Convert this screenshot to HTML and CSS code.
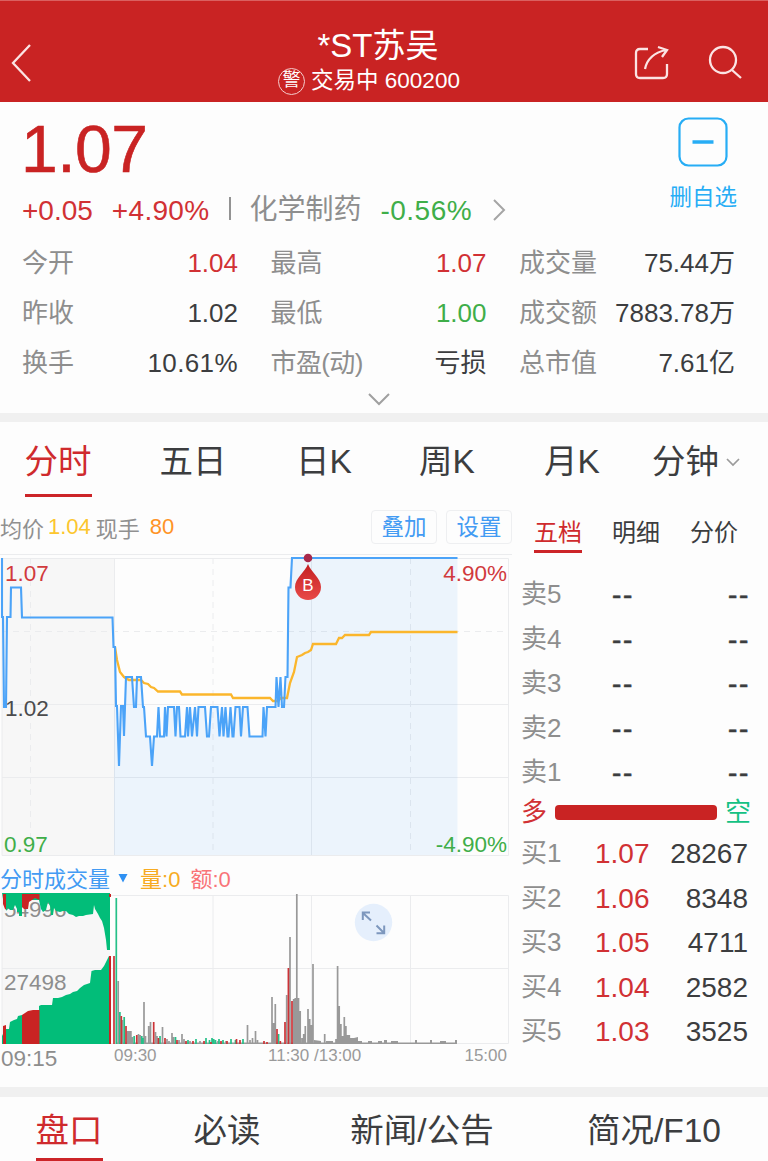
FILE: index.html
```
<!DOCTYPE html>
<html lang="zh-CN">

<head>
  <title>*ST苏吴 600200</title>
  <meta charset="utf-8">
  <link rel="stylesheet" href="styles.css">
</head>

<body>
  <header>
    <svg class="back" width="22" height="40" viewBox="0 0 22 40"><path d="M20 2L3 20L20 38"/></svg>
    <div class="title">
      <h1>*ST苏吴</h1>
      <p><span class="warn">警</span>交易中 600200</p>
    </div>
    <svg class="share" width="36" height="36" viewBox="0 0 36 36"><path d="M14 4H6Q2 4 2 8V29Q2 33 6 33H29Q33 33 33 29V19M11 24Q14 9 32 5M24 2L33 5L28 12"/></svg>
    <svg class="search" width="36" height="36" viewBox="0 0 36 36"><circle cx="15" cy="15" r="13"/><path d="M24 25L33 33"/></svg>
  </header>

  <section class="quote">
    <div class="summary">
      <div>
        <div class="price red">1.07</div>
        <div class="change">
          <span class="red">+0.05</span>
          <span class="red percent">+4.90%</span>
          <i class="divider"></i>
          <span class="sector">化学制药</span>
          <span class="green sector-change">-0.56%</span>
          <svg class="arrow" width="14" height="22" viewBox="0 0 14 22"><path d="M2 1L12 11L2 21"/></svg>
        </div>
      </div>
      <div class="watch">
        <svg width="50" height="50" viewBox="0 0 50 50"><rect x="1.500" y="1.500" width="47" height="47" rx="9"/><path d="M14.500 25H35.500"/></svg>
        <span>删自选</span>
      </div>
    </div>
    <dl class="stats">
      <div><dt>今开</dt><dd class="red">1.04</dd></div>
      <div><dt>最高</dt><dd class="red">1.07</dd></div>
      <div><dt>成交量</dt><dd>75.44万</dd></div>
      <div><dt>昨收</dt><dd>1.02</dd></div>
      <div><dt>最低</dt><dd class="green">1.00</dd></div>
      <div><dt>成交额</dt><dd>7883.78万</dd></div>
      <div><dt>换手</dt><dd class="turnover">10.61%</dd></div>
      <div><dt class="pe">市盈(动)</dt><dd>亏损</dd></div>
      <div><dt>总市值</dt><dd>7.61亿</dd></div>
    </dl>
    <svg class="more" width="22" height="13" viewBox="0 0 22 13"><path d="M1 1L11 11L21 1"/></svg>
  </section>

  <nav class="periods">
    <a class="active">分时</a>
    <a>五日</a>
    <a>日K</a>
    <a>周K</a>
    <a>月K</a>
    <a class="minutes">分钟<svg width="14" height="9" viewBox="0 0 14 9"><path d="M1 1L7 7L13 1"/></svg></a>
  </nav>

  <main>
    <section class="charts">
      <div class="toolbar">
        <span>均价</span><span class="yellow">1.04</span><span>现手</span><span class="orange">80</span>
        <button type="button">叠加</button>
        <button type="button">设置</button>
      </div>

      <svg class="chart" width="512" height="306" viewBox="0 552 512 306">
        <defs>
          <linearGradient id="drop" x1="0" y1="0" x2="0" y2="1">
            <stop offset="0" stop-color="#c41f22"/>
            <stop offset="1" stop-color="#e84a48"/>
          </linearGradient>
        </defs>
        <rect class="auction" x="2" y="558" width="112" height="297"/>
        <path class="grid" d="M0 554.500H512M2 558.500H508.500V855.500H2ZM2 704.500H508M2 777.500H508M114.500 558V855M311.500 558V855"/>
        <path class="grid dashed" d="M2 631.500H508M30.500 558V855M213 558V855M410.500 558V855"/>
        <path class="area" d="M114 855V647H115L116 706L119 766L121 706L124 736L126 677L132 677L134 707L137 677H141L143 707L146 736H150L152 766L154 736H157L158.500 707L160 736.500H164L165 707L166.500 736.500L168 707H174L175.500 736.500L177 707H179L180.500 736.500H185L187 707L188 736.500L190 707L192 736.500L195 707L197 736.500L198.500 707H205L207 736.500H209L211 707H217.500L219.500 736.500L222 707L223.500 736.500L225.500 707L227.500 736.500L230.500 707L232.500 736.500L235.500 707H239.500L241 736.500L243 707H247.500L249.500 736.500H262.500L267 707H284L287.500 677L288.500 587L292 558H457.500V855Z"/>
        <text class="red" x="5" y="581">1.07</text>
        <text x="5" y="716">1.02</text>
        <text class="green" x="4" y="852">0.97</text>
        <text class="red end" x="507" y="581">4.90%</text>
        <text class="green end" x="507" y="852">-4.90%</text>
        <path class="average" d="M115 647L117 660L120 672L124 677L129 680H141L144 683L148 684L151 687L154 688L158 691.500H180L182 694.500H231L233 698H270L273 701H278L281 698H287L290 683L294 672L297 657L302 655L305 653L308 652L311 650L313 644H336L339 638H342L345 635H369L371 632H457.500"/>
        <path class="line" d="M2 558V617H3L4 707H6L7 617H10.500L11 587.500H21L22 617.500H112.500L113.500 647H115L116 706H117L119 766L121 706H123L124 736L126 677H132L134 707H136L137 677H141L143 707H144L146 736.500H150L152 766L154 736.500H157L158.500 707L160 736.500H164L165 707L166.500 736.500L168 707H174L175.500 736.500L177 707H179L180.500 736.500H185L187 707L188 736.500L190 707L192 736.500L195 707L197 736.500L198.500 707H205L207 736.500H209L211 707H217.500L219.500 736.500L222 707L223.500 736.500L225.500 707L227.500 736.500H228.500L230.500 707L232.500 736.500H233.500L235.500 707H239.500L241 736.500L243 707H247.500L249.500 736.500H262.500L263.500 707L265.500 736.500L267 707H275.500L276.500 677L278.500 707L280.500 677L282 707H284L285.500 677H287.500L288.500 587.500H290.500L292 558H457.500"/>
        <circle class="dot" cx="308" cy="558" r="4.300"/>
        <path d="M308 564C305 572 295 578 295 587A13 13 0 0 0 321 587C321 578 311 572 308 564Z" fill="url(#drop)"/>
        <text class="mark" x="308" y="591">B</text>
      </svg>

      <div class="legend">
        <span class="blue">分时成交量</span>
        <svg width="10" height="10" viewBox="0 0 10 10"><path d="M0.500 1H9.500L5 9.500Z"/></svg>
        <span class="amber">量:0</span>
        <span class="pink">额:0</span>
      </div>

      <svg class="chart volume" width="512" height="178" viewBox="0 892 512 178">
        <rect class="auction" x="2" y="895" width="108" height="149"/>
        <path class="grid" d="M2 895.500H508.500V1043.500H2ZM2 968.500H508M213 895V1043M311.500 895V1043M410.500 895V1043"/>
        <text x="4" y="917">54996</text>
        <text x="4" y="990">27498</text>

        <!-- call auction: unmatched orders on top, matched at the bottom -->
        <path class="fill-green" d="M2 893H110V950H107L106 940L104 928L102 921L100 918L98 914L95 909L94 905L93 914L86 915L83 916H79L76 917L73 915L69 914L66 911H63L60 912L56 911L54 908L53 915H51L50 906L48 902L46 910L43 912L41 909L39 900H22V916H19V912H17V909L15 905L13 910H10L8 908L6 911V904L3 899Z"/>
        <path class="fill-red" d="M3 894H6V909H5L3 904ZM22 894H39.500V900L35 898L32 900L29 902L28 909H24L22 907ZM109 894H111V897H109Z"/>
        <path class="fill-green" d="M2 1044V1036L4 1032L6 1029H9L10 1022L14 1020L17 1019L18 1016L22 1015V1044ZM39 1044V1006L41 1005H52L53 998L58 998L62 997L66 995L70 994L73 992L77 991L80 988L84 985L90 983L91.500 971L95 970H101L104 966L107 960L109 956V1044Z"/>
        <path class="fill-red" d="M3 1026L6 1025V1044H3ZM22 1044V1015L25 1013L28 1011L33 1010H39.500V1044ZM109 956H111V1044H109Z"/>

        <path class="bar grey" d="M118.200 1044V981M122.500 1044V1020M127.500 1044V1031M129.200 1044V1031M130.900 1044V1031M132.500 1044V1037M138.500 1044V1034M140.200 1044V1035M144 1044V1002M145.500 1044V1036M148.700 1044V1026M150.500 1044V1022M155.500 1044V1032M157 1044V1036M162.500 1044V1027M167 1044V1039M169 1044V1041M172 1044V1033M173.700 1044V1037M179 1044V1040M182 1044V1034M184 1044V1039M190 1044V1041M200 1044V1041M218 1044V1041M226 1044V1041M247.500 1044V1025M250 1044V1040M252.500 1044V1038M255.500 1044V1031M257.500 1044V1040M272 1044V997M273.700 1044V1023M275.300 1044V1004M286.700 1044V995M290 1044V937M293.700 1044V999M295.300 1044V998M296.800 1044V894M298.500 1044V998M300.200 1044V1011M302 1044V1038M303.700 1044V1034M305.300 1044V1026M308 1044V1009M309.700 1044V1019M311.400 1044V1025M313 1044V964M324.700 1044V1034M336 1044V1039M337.600 1044V966M339.200 1044V1006M340.900 1044V1024M342.600 1044V1036M344.300 1044V1017M345.900 1044V1026M347.600 1044V1035M349.300 1044V1035"/>
        <path class="fill-grey" d="M314 1044V1040L321 1041V1044ZM326 1044V1041H333V1044ZM350 1044V1038H354L358 1037V1044ZM358 1044V1041H362V1044ZM368 1041H372V1044H368ZM378 1041H382V1044H378ZM384 1040H387V1044H384ZM391 1041H398V1044H391ZM415 1040H417V1044H415ZM430 1040H432V1044H430ZM440 1041H446V1044H440ZM455 1040H457V1044H455ZM117 1042.500H457V1044H117Z"/>
        <path class="bar green" d="M116.300 1044V898M119.900 1044V1012M124.200 1044V1017M134.200 1044V1036M141.800 1044V1036M143 1044V1038M160 1044V1036M175.500 1044V1037M188 1044V1040M196 1044V1039M206 1044V1038M209.500 1044V1040M212 1044V1038M213.700 1044V1039M215.500 1044V1040M219 1044V1039M223 1044V1040M231 1044V1039M235.500 1044V1040M243 1044V1039M278.600 1044V1034"/>
        <path class="bar red" d="M114 1044V956M121.300 1044V1016M126 1044V1026M136.800 1044V1035M153.700 1044V1022M158.400 1044V1038M165 1044V1038M177 1044V1040M186 1044V1041M193 1044V1041M204 1044V1041M211 1044V1042M221 1044V1041M227 1044V1041M236.500 1044V1039M240 1044V1040M264 1044V1041M267 1044V1042M277 1044V1029M280.300 1044V1041M285 1044V1022M288.400 1044V968M292 1044V1001"/>

        <circle class="expand-bg" cx="373.500" cy="922.500" r="18.700"/>
        <path class="expand" d="M371 920.500L363 913M370 912.500H362.800V920M376.500 925.500L384 933M384.200 925.500V933.200H376.500"/>

        <text x="1" y="1066">09:15</text>
        <text class="small" x="114" y="1061">09:30</text>
        <text class="small" x="268" y="1061">11:30 /13:00</text>
        <text class="small end" x="507" y="1061">15:00</text>
      </svg>
    </section>

    <aside>
      <nav class="book-tabs">
        <a class="active">五档</a>
        <a>明细</a>
        <a>分价</a>
      </nav>
      <ul class="book">
        <li><span>卖5</span><b>--</b><b>--</b></li>
        <li><span>卖4</span><b>--</b><b>--</b></li>
        <li><span>卖3</span><b>--</b><b>--</b></li>
        <li><span>卖2</span><b>--</b><b>--</b></li>
        <li><span>卖1</span><b>--</b><b>--</b></li>
      </ul>
      <div class="balance"><span class="red">多</span><i></i><span class="teal">空</span></div>
      <ul class="book bids">
        <li><span>买1</span><em>1.07</em><em>28267</em></li>
        <li><span>买2</span><em>1.06</em><em>8348</em></li>
        <li><span>买3</span><em>1.05</em><em>4711</em></li>
        <li><span>买4</span><em>1.04</em><em>2582</em></li>
        <li><span>买5</span><em>1.03</em><em>3525</em></li>
      </ul>
    </aside>
  </main>

  <nav class="bottom">
    <a class="active">盘口</a>
    <a>必读</a>
    <a>新闻/公告</a>
    <a>简况/F10</a>
  </nav>
</body>

</html>
```
FILE: styles.css
```
* {
  box-sizing: border-box;
}

body {
  background-color: #fdfdfd;
  color: #3c3d3f;
  font-family: "Liberation Sans", "Noto Sans CJK SC", sans-serif;
  height: 1161px;
  margin: 0;
  overflow: hidden;
}

h1, p, dl, dd, ul {
  margin: 0;
  padding: 0;
}

svg {
  display: block;
  fill: none;
}

header {
  align-items: center;
  background-color: #c92323;
  border-top: 1px solid #da6060;
  color: white;
  display: grid;
  grid-template-columns: 100px 556px 74px 38px;
  height: 102px;
  padding-top: 21px;
}

header svg {
  stroke: #fbe4e4;
  stroke-width: 2.3;
}

.back {
  margin-left: 10px;
}

.share {
  margin-left: -22px;
}

.search {
  margin-left: -22px;
}

.title {
  text-align: center;
}

.title h1 {
  font-size: 33px;
  font-weight: normal;
  line-height: 40px;
  padding-top: 4px;
}

.title p {
  align-items: center;
  display: flex;
  font-size: 22.5px;
  justify-content: center;
  line-height: 28px;
  margin: 1px 18px 9px 0;
}

.warn {
  border: 1.5px solid #f5cccc;
  border-radius: 50%;
  font-size: 18px;
  height: 27px;
  line-height: 23px;
  margin-right: 6px;
  width: 27px;
}

.red { color: #d13134; }
.green { color: #3fae49; }
.yellow { color: #fcc62e; }
.orange { color: #ff9326; }
.blue { color: #439bf3; }
.amber { color: #f7ab22; }
.pink { color: #f97478; }
.teal { color: #14c184; }

.quote {
  border-bottom: 9px solid #f0f0f0;
  height: 320px;
}

.summary {
  display: flex;
  height: 136px;
  justify-content: space-between;
  padding: 15px 31px 0 22px;
}

.price {
  -webkit-text-stroke: 0.6px;
  color: #c92323;
  font-size: 66px;
  height: 68px;
  line-height: 65px;
  margin-left: -1px;
  letter-spacing: -0.5px;
}

.change {
  align-items: center;
  display: flex;
  font-size: 28px;
  height: 51px;
}

.percent {
  letter-spacing: 0.3px;
  margin-left: 19px;
}

.divider {
  background-color: #939393;
  height: 23px;
  margin: 0 18px 4px 20px;
  width: 2px;
}

.sector {
  color: #8e8e8e;
  line-height: 40px;
  margin: -2px 19px 0 0;
}

.sector-change {
  letter-spacing: 0.5px;
}

.arrow {
  margin: 0 0 2px 20px;
  stroke: #a5a5a5;
  stroke-width: 2;
}

.watch {
  align-items: center;
  color: #27adf5;
  display: flex;
  flex-direction: column;
  font-size: 22.5px;
  line-height: 30px;
}

.watch svg {
  margin-bottom: 16px;
  stroke: #27adf5;
  stroke-width: 2.2;
}

.watch path {
  stroke-width: 3.5;
}

.stats {
  column-gap: 32.5px;
  display: grid;
  font-size: 26px;
  grid-template-columns: repeat(3, 216px);
  grid-auto-rows: 50px;
  line-height: 51px;
  padding-left: 22px;
}

.stats div {
  display: flex;
  justify-content: space-between;
}

.stats dt {
  color: #8e8e8e;
}

.stats .turnover {
  letter-spacing: 0.4px;
}

.stats .pe {
  letter-spacing: -0.6px;
}

.more {
  margin: 5px auto 0 368px;
  stroke: #a0a0a0;
  stroke-width: 2;
}

.periods {
  display: grid;
  font-size: 33.5px;
  grid-template-columns: 116px 154px 108px 138px 112px 136px;
  height: 78px;
  justify-items: center;
  line-height: 72px;
  padding-top: 3px;
}

.periods a {
  align-items: center;
  display: flex;
  height: 72px;
  padding-top: 2px;
}

.periods svg {
  margin-left: 7px;
  stroke: #9b9b9b;
  stroke-width: 1.7;
}

.active {
  border-bottom: 3.5px solid #cc2428;
  color: #cf2a2d;
}

.periods .active {
  padding-top: 5px;
}

main {
  border-bottom: 10px solid #f0f0f0;
  display: grid;
  grid-template-columns: 512px 256px;
  height: 597px;
}

.toolbar {
  align-items: center;
  color: #909090;
  display: flex;
  font-size: 22px;
  height: 52px;
  padding-top: 1px;
}

.toolbar .yellow {
  margin: 0 5px 0 4px;
}

.toolbar .orange {
  margin: 0 auto 0 10px;
}

button {
  background-color: #fdfdfd;
  border: 1.5px solid #eeeff1;
  border-radius: 4px;
  color: #439bf3;
  font-family: inherit;
  font-size: 22.5px;
  height: 34px;
  line-height: 32px;
  margin-left: 9px;
  padding: 1px 0 0;
  width: 66px;
}

.chart text {
  fill: #4b4b4d;
  font-size: 22.5px;
}

.chart text.red { fill: #d13a3d; }
.chart text.green { fill: #3fae49; }
.chart text.end { text-anchor: end; }

.chart text.mark {
  fill: white;
  font-size: 17px;
  text-anchor: middle;
}

.auction {
  fill: #f7f7f7;
}

.grid {
  stroke: #ebecee;
}

.dashed {
  stroke-dasharray: 6 5;
}

.area {
  fill: #439bf3;
  fill-opacity: 0.09;
}

.line {
  stroke: #4ba3f8;
  stroke-width: 2.1;
}

.average {
  stroke: #fbb62c;
  stroke-width: 2.3;
}

.dot {
  fill: #a8294a;
}

.legend {
  align-items: center;
  display: flex;
  font-size: 22px;
  height: 34px;
  padding-top: 3px;
}

.legend path {
  fill: #2f91f3;
}

.legend svg {
  margin: 2px 12px 0 8px;
}

.legend .pink {
  margin-left: 10px;
}

.volume text {
  fill: #8d8d8d;
}

.volume text.small {
  fill: #9a9a9a;
  font-size: 17px;
}

.fill-green { fill: #02bd79; }
.fill-red { fill: #c92323; }
.fill-grey { fill: #999; }

.bar {
  stroke-width: 1.7;
}

.bar.grey { stroke: #999; }
.bar.green { stroke: #25c088; }
.bar.red { stroke: #cc3337; }

.expand-bg {
  fill: #e5effc;
}

.expand {
  stroke: #7d97bd;
  stroke-width: 2;
}

.book-tabs {
  display: flex;
  font-size: 24px;
  gap: 30px;
  height: 72px;
  line-height: 38px;
  padding: 14px 0 0 22px;
}

.book-tabs a {
  height: 38.5px;
}

.book {
  font-size: 26px;
  list-style: none;
}

.book li {
  display: grid;
  grid-template-columns: 74px 63px 90px;
  height: 44.6px;
  line-height: 45.6px;
  padding-left: 9px;
}

.book span {
  color: #8e8e8e;
}

.book b {
  -webkit-text-stroke: 0.6px;
  font-size: 28px;
  font-weight: normal;
  letter-spacing: 1.7px;
  padding-left: 17px;
}

.book b:last-child {
  margin-right: -2px;
  text-align: right;
}

.book em {
  font-size: 28px;
  font-style: normal;
}

.book em:nth-child(2) {
  color: #d13134;
}

.book em:last-child {
  text-align: right;
}

.balance {
  align-items: center;
  display: flex;
  font-size: 26px;
  height: 36px;
  line-height: 36px;
  padding: 0 0 1px 9px;
}

.balance i {
  background-color: #c92323;
  border-radius: 4px;
  height: 15px;
  margin: 0 8px;
  width: 162px;
}

.bottom {
  display: grid;
  font-size: 33.5px;
  grid-template-columns: 138px 178px 212px 252px;
  height: 64px;
  justify-items: center;
  line-height: 68px;
}

.bottom a {
  height: 64px;
}
```
